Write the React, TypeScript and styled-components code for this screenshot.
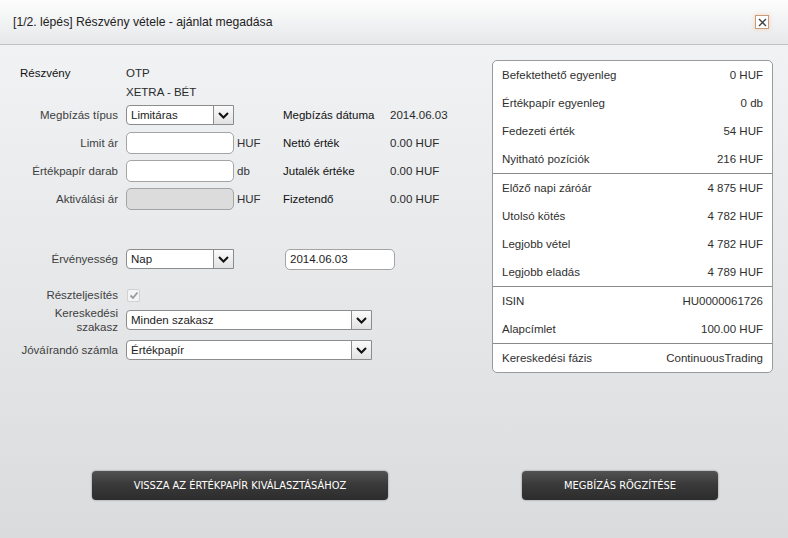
import styled, { createGlobalStyle } from "styled-components";

const GlobalStyle = createGlobalStyle`
  html, body {
    margin: 0;
    padding: 0;
    height: 100%;
  }

  body {
    font-family: "Liberation Sans", Arial, sans-serif;
    font-size: 11.5px;
    color: #2b2b2b;
  }

  #root {
    height: 100%;
  }
`;

const accountRows = [
  ["Befektethető egyenleg", "0 HUF"],
  ["Értékpapír egyenleg", "0 db"],
  ["Fedezeti érték", "54 HUF"],
  ["Nyitható pozíciók", "216 HUF"],
];

const priceRows = [
  ["Előző napi záróár", "4 875 HUF"],
  ["Utolsó kötés", "4 782 HUF"],
  ["Legjobb vétel", "4 782 HUF"],
  ["Legjobb eladás", "4 789 HUF"],
];

const paperRows = [
  ["ISIN", "HU0000061726"],
  ["Alapcímlet", "100.00 HUF"],
];

const phaseRows = [["Kereskedési fázis", "ContinuousTrading"]];

function Chevron() {
  return (
    <svg width="11" height="7" viewBox="0 0 11 7">
      <path d="M1 1 L5.5 5.5 L10 1" fill="none" stroke="#111" strokeWidth="2" />
    </svg>
  );
}

function Select({ value, width }: { value: string; width: number }) {
  return (
    <SelectBox $width={width}>
      <SelectValue>{value}</SelectValue>
      <ArrowBox>
        <Chevron />
      </ArrowBox>
    </SelectBox>
  );
}

export default function App() {
  return (
    <>
      <GlobalStyle />
      <Page>
        <Header>
          <Title>[1/2. lépés] Részvény vétele - ajánlat megadása</Title>
          <CloseBox>
            <svg width="9" height="9" viewBox="0 0 9 9">
              <path d="M1 1 L8 8 M8 1 L1 8" stroke="#444" strokeWidth="1.4" />
            </svg>
          </CloseBox>
        </Header>

        <Body>
          <Form>
            <Row $h={19}>
              <Label $lead>Részvény</Label>
              <Value>OTP</Value>
            </Row>
            <Row $h={19}>
              <Label />
              <Value>XETRA - BÉT</Value>
            </Row>
            <Row $h={28}>
              <Label>Megbízás típus</Label>
              <Select value="Limitáras" width={108} />
              <Unit />
              <SideLabel>Megbízás dátuma</SideLabel>
              <Value>2014.06.03</Value>
            </Row>
            <Row $h={28}>
              <Label>Limit ár</Label>
              <Input $width={108} />
              <Unit>HUF</Unit>
              <SideLabel>Nettó érték</SideLabel>
              <Value>0.00 HUF</Value>
            </Row>
            <Row $h={28}>
              <Label>Értékpapír darab</Label>
              <Input $width={108} />
              <Unit>db</Unit>
              <SideLabel>Jutalék értéke</SideLabel>
              <Value>0.00 HUF</Value>
            </Row>
            <Row $h={28}>
              <Label>Aktiválási ár</Label>
              <Input $width={108} $disabled />
              <Unit>HUF</Unit>
              <SideLabel>Fizetendő</SideLabel>
              <Value>0.00 HUF</Value>
            </Row>

            <Row $h={28} $mt={32}>
              <Label>Érvényesség</Label>
              <Select value="Nap" width={108} />
              <DateInput>2014.06.03</DateInput>
            </Row>
            <Row $h={20} $mt={12}>
              <Label>Részteljesítés</Label>
              <CheckBox>
                <svg width="10" height="9" viewBox="0 0 10 9">
                  <path d="M1.5 4.5 L4 7 L8.5 1.5" fill="none" stroke="#9a9a9a" strokeWidth="1.8" />
                </svg>
              </CheckBox>
            </Row>
            <Row $h={30}>
              <Label>
                Kereskedési
                <br />
                szakasz
              </Label>
              <Select value="Minden szakasz" width={246} />
            </Row>
            <Row $h={28} $mt={1}>
              <Label>Jóváírandó számla</Label>
              <Select value="Értékpapír" width={246} />
            </Row>
          </Form>

          <InfoPanel>
            {[accountRows, priceRows, paperRows, phaseRows].map((group, i) => (
              <InfoGroup key={i}>
                {group.map(([name, amount]) => (
                  <InfoRow key={name}>
                    <span>{name}</span>
                    <span>{amount}</span>
                  </InfoRow>
                ))}
              </InfoGroup>
            ))}
          </InfoPanel>
        </Body>

        <Footer>
          <DarkButton $width={296}>Vissza az értékpapír kiválasztásához</DarkButton>
          <DarkButton $width={196}>Megbízás rögzítése</DarkButton>
        </Footer>
      </Page>
    </>
  );
}

const Page = styled.div`
  display: flex;
  flex-direction: column;
  height: 100vh;
  background: linear-gradient(#f2f4f6, #e4e6e8 60%, #d9dbdd);
`;

const Header = styled.div`
  display: flex;
  align-items: center;
  justify-content: space-between;
  height: 44px;
  padding: 0 19px 0 13px;
  background: linear-gradient(#fdfdfd, #e7e8ea);
  border-bottom: 1px solid #bfc1c3;
`;

const Title = styled.div`
  font-size: 12.2px;
  color: #222;
`;

const CloseBox = styled.div`
  display: flex;
  align-items: center;
  justify-content: center;
  box-sizing: border-box;
  width: 14px;
  height: 14px;
  background: #fff;
  border: 1px solid #c79a7c;
  box-shadow: 0 0 3px 1px rgba(245, 185, 140, 0.35);
`;

const Body = styled.div`
  flex: 1;
  display: flex;
  justify-content: space-between;
  align-items: flex-start;
  padding: 15px 15px 0 0;
`;

const Form = styled.div`
  display: flex;
  flex-direction: column;
  padding-top: 3px;
`;

const Row = styled.div<{ $h: number; $mt?: number }>`
  display: flex;
  align-items: center;
  height: ${(p) => p.$h}px;
  margin-top: ${(p) => p.$mt ?? 0}px;
`;

const Label = styled.div<{ $lead?: boolean }>`
  flex: none;
  box-sizing: border-box;
  width: 106px;
  margin: 0 8px 0 12px;
  padding-left: ${(p) => (p.$lead ? "8px" : "0")};
  text-align: ${(p) => (p.$lead ? "left" : "right")};
  line-height: 14px;
  color: ${(p) => (p.$lead ? "#111" : "#404040")};
`;

const Value = styled.div`
  color: #2a2a2a;
`;

const Unit = styled.div`
  flex: none;
  width: 46px;
  margin-left: 3px;
  color: #333;
`;

const SideLabel = styled.div`
  flex: none;
  width: 107px;
  color: #111;
`;

const SelectBox = styled.div<{ $width: number }>`
  flex: none;
  display: flex;
  box-sizing: border-box;
  width: ${(p) => p.$width}px;
  height: 20px;
  background: #fff;
  border: 1px solid #8c8c8c;
  border-radius: 4px 0 0 4px;
`;

const SelectValue = styled.div`
  flex: 1;
  display: flex;
  align-items: center;
  padding-left: 4px;
  color: #222;
`;

const ArrowBox = styled.div`
  display: flex;
  align-items: center;
  justify-content: center;
  width: 19px;
  border-left: 1px solid #8c8c8c;
  background: linear-gradient(#fbfbfb, #e2e2e2);
`;

const Input = styled.div<{ $width: number; $disabled?: boolean }>`
  flex: none;
  box-sizing: border-box;
  width: ${(p) => p.$width}px;
  height: 22px;
  background: ${(p) => (p.$disabled ? "#dcdcdc" : "#fff")};
  border: 1px solid #a4a4a4;
  border-radius: 5px;
`;

const DateInput = styled.div`
  display: flex;
  align-items: center;
  box-sizing: border-box;
  width: 110px;
  height: 21px;
  margin-left: 51px;
  padding-left: 4px;
  background: #fff;
  border: 1px solid #a4a4a4;
  border-radius: 5px;
  color: #222;
`;

const CheckBox = styled.div`
  display: flex;
  align-items: center;
  justify-content: center;
  box-sizing: border-box;
  width: 13px;
  height: 13px;
  margin-left: 1px;
  background: #f3f4f5;
  border: 1px solid #cfd1d3;
  border-radius: 2px;
`;

const InfoPanel = styled.div`
  width: 279px;
  background: #fff;
  border: 1px solid #9a9a9a;
  border-radius: 5px;
`;

const InfoGroup = styled.div`
  & + & {
    border-top: 1px solid #8a8a8a;
  }
`;

const InfoRow = styled.div`
  display: flex;
  align-items: center;
  justify-content: space-between;
  height: 28px;
  padding: 0 9px;
  color: #2f2f2f;
`;

const Footer = styled.div`
  display: flex;
  gap: 134px;
  padding: 0 0 38px 92px;
`;

const DarkButton = styled.div<{ $width: number }>`
  display: flex;
  align-items: center;
  justify-content: center;
  width: ${(p) => p.$width}px;
  height: 29px;
  background: linear-gradient(#525252, #3a3a3a 45%, #2c2c2c);
  border-radius: 4px;
  box-shadow: 0 0 2px rgba(0, 0, 0, 0.45);
  color: #fff;
  font-family: "Liberation Sans Narrow", "DejaVu Sans Condensed", "Liberation Sans", sans-serif;
  font-size: 11px;
  text-transform: uppercase;
`;
